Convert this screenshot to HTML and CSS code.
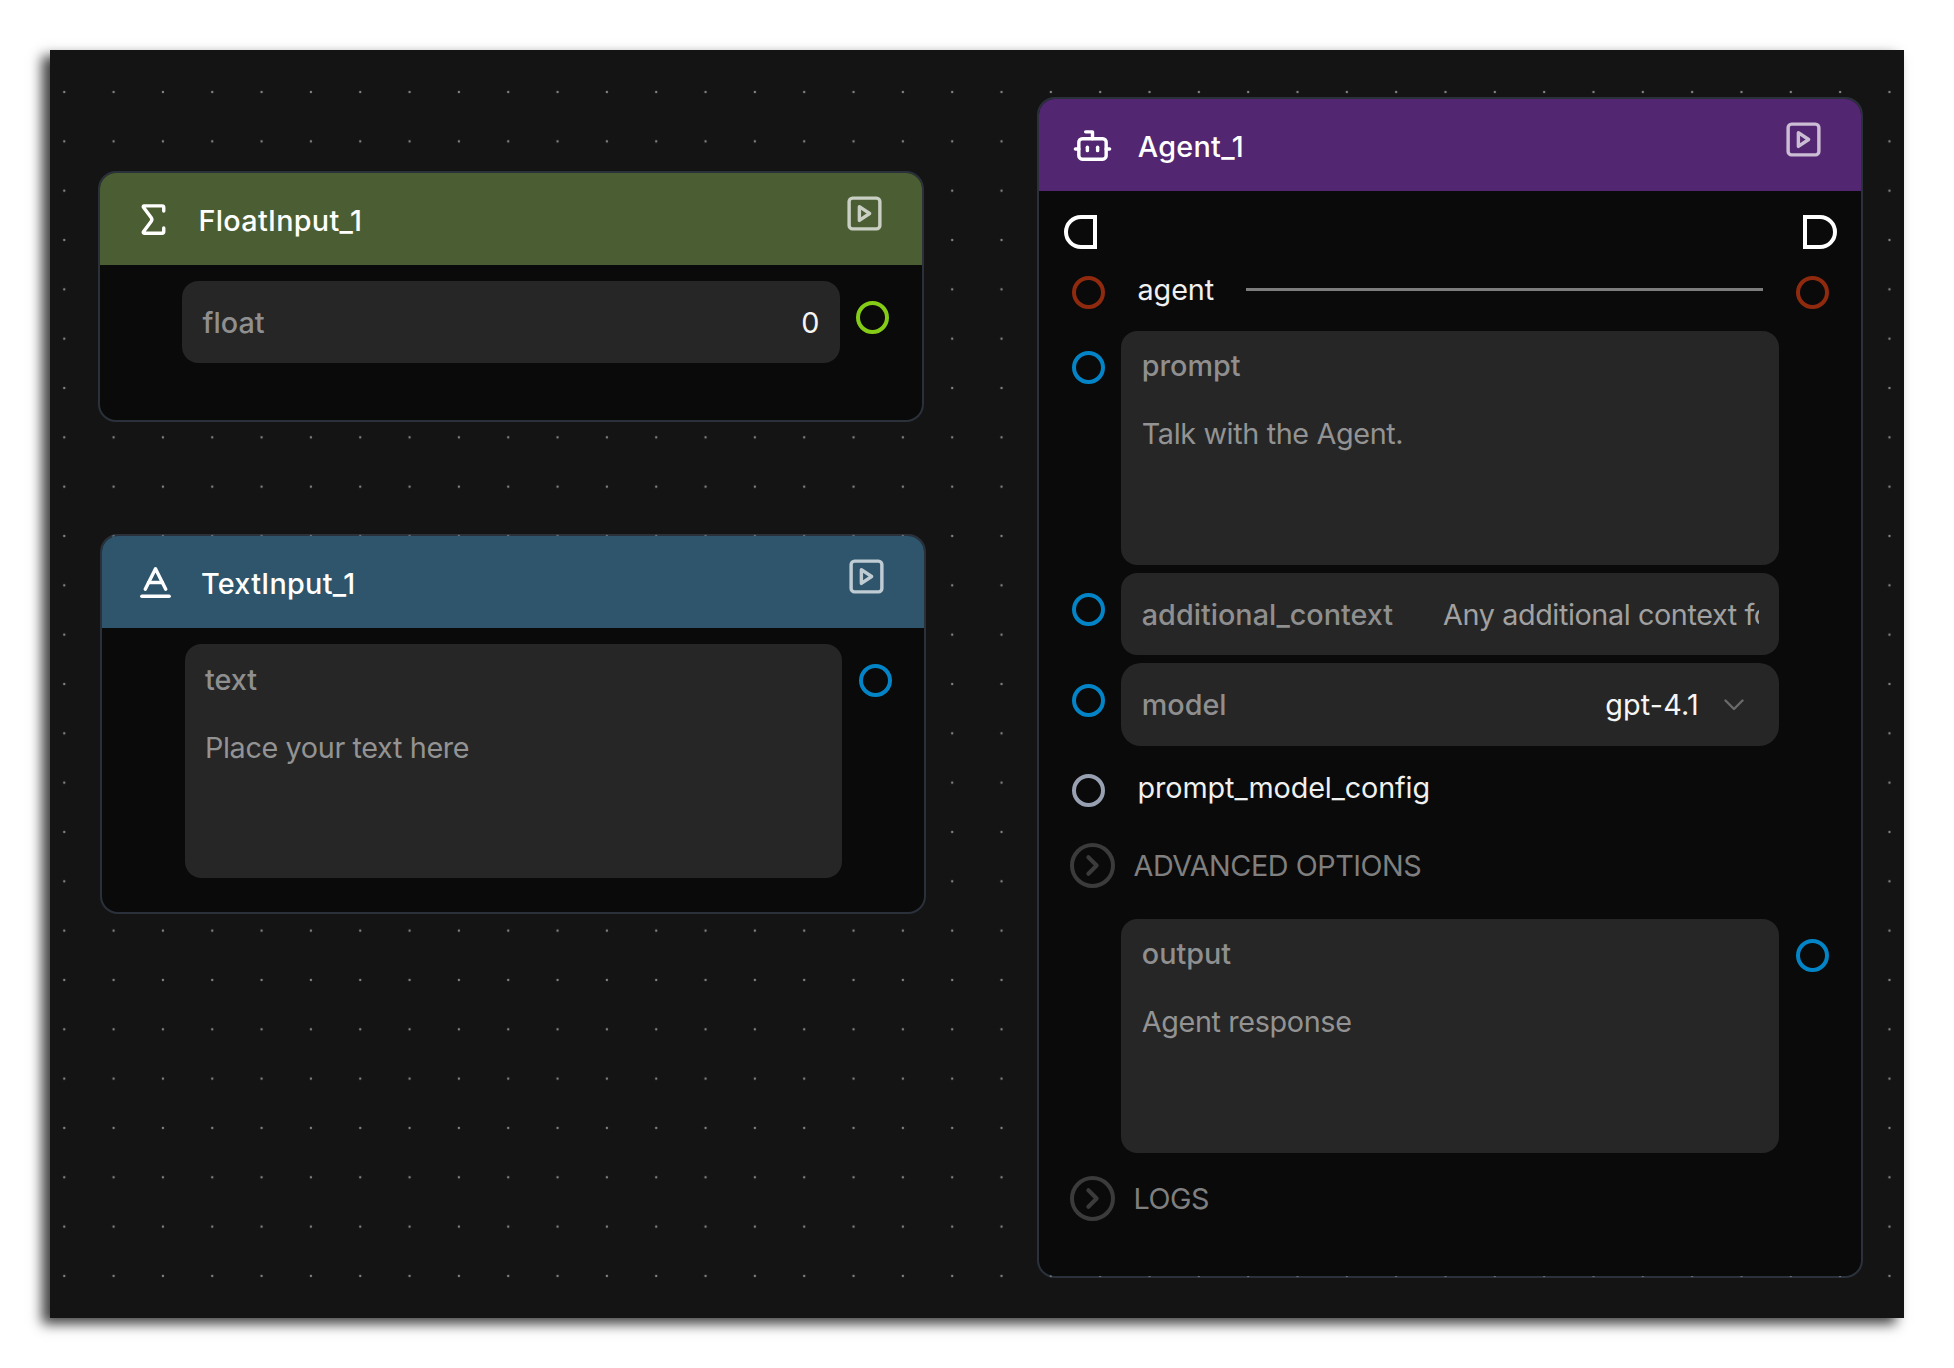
FILE: index.html
```html
<!DOCTYPE html>
<html lang="en">
<head>
  <meta charset="UTF-8">
  <meta name="viewport" content="width=device-width, initial-scale=1.0">
  <title>Workflow</title>
  <link rel="stylesheet" href="styles.css">
</head>
<body>
  <!-- shared icons -->
  <svg class="sprite" width="0" height="0">
    <symbol id="icon-play" viewBox="0 0 24 24">
      <rect x="3" y="3" width="18" height="18" rx="2"/>
      <path d="m9 8 6 4-6 4Z"/>
    </symbol>
    <symbol id="icon-chevron" viewBox="0 0 24 24">
      <path d="m9 18 6-6-6-6"/>
    </symbol>
  </svg>

  <div class="canvas">
    <svg class="dots" width="100%" height="100%">
      <pattern id="dots" x="-10.4" y="17.35" width="49.33" height="49.33" patternUnits="userSpaceOnUse">
        <circle cx="24.665" cy="24.665" r="1.2"/>
      </pattern>
      <rect width="100%" height="100%" fill="url(#dots)"/>
    </svg>

    <div class="node node-float">
      <div class="header">
        <svg class="icon" viewBox="0 0 24 24">
          <path d="M18 7V5a1 1 0 0 0-1-1H6.5a.5.5 0 0 0-.4.8l4.5 6a2 2 0 0 1 0 2.4l-4.5 6a.5.5 0 0 0 .4.8H17a1 1 0 0 0 1-1v-2"/>
        </svg>
        <div class="title">FloatInput_1</div>
        <svg class="icon run"><use href="#icon-play"/></svg>
      </div>
      <div class="body">
        <div class="row">
          <div class="field">
            <span class="label">float</span>
            <span class="value">0</span>
          </div>
          <i class="port out lime"></i>
        </div>
      </div>
    </div>

    <div class="node node-text">
      <div class="header">
        <svg class="icon" viewBox="0 0 24 24">
          <path d="M4 20h16"/>
          <path d="m6 16 6-12 6 12"/>
          <path d="M8 12h8"/>
        </svg>
        <div class="title">TextInput_1</div>
        <svg class="icon run"><use href="#icon-play"/></svg>
      </div>
      <div class="body">
        <div class="row">
          <div class="field area">
            <span class="label">text</span>
            <span class="placeholder">Place your text here</span>
          </div>
          <i class="port out blue"></i>
        </div>
      </div>
    </div>

    <div class="node node-agent">
      <div class="header">
        <svg class="icon" viewBox="0 0 24 24">
          <path d="M12 8V4H8"/>
          <rect x="4" y="8" width="16" height="12" rx="2"/>
          <path d="M2 14h2"/>
          <path d="M20 14h2"/>
          <path d="M15 13v2"/>
          <path d="M9 13v2"/>
        </svg>
        <div class="title">Agent_1</div>
        <svg class="icon run"><use href="#icon-play"/></svg>
      </div>
      <div class="body">
        <div class="exec">
          <i class="gate gate-in"></i>
          <i class="gate gate-out"></i>
        </div>
        <div class="row">
          <i class="port in red"></i>
          <div class="plain">agent<hr></div>
          <i class="port out red"></i>
        </div>
        <div class="row">
          <i class="port in blue"></i>
          <div class="field area">
            <span class="label">prompt</span>
            <span class="placeholder">Talk with the Agent.</span>
          </div>
        </div>
        <div class="row">
          <i class="port in blue"></i>
          <div class="field">
            <span class="label">additional_context</span>
            <span class="placeholder clip">Any additional context fo</span>
          </div>
        </div>
        <div class="row">
          <i class="port in blue"></i>
          <div class="field select">
            <span class="label">model</span>
            <span class="value">gpt-4.1</span>
            <svg class="caret" viewBox="0 0 20 12"><path d="m1.5 1.5 8.5 8.5 8.5-8.5"/></svg>
          </div>
        </div>
        <div class="row">
          <i class="port in slate"></i>
          <div class="plain">prompt_model_config</div>
        </div>
        <div class="section">
          <span class="toggle"><svg><use href="#icon-chevron"/></svg></span>
          ADVANCED OPTIONS
        </div>
        <div class="row">
          <div class="field area">
            <span class="label">output</span>
            <span class="placeholder">Agent response</span>
          </div>
          <i class="port out blue"></i>
        </div>
        <div class="section">
          <span class="toggle"><svg><use href="#icon-chevron"/></svg></span>
          LOGS
        </div>
      </div>
    </div>
  </div>
</body>
</html>
```

FILE: styles.css
```css
* {
  margin: 0;
  padding: 0;
  box-sizing: border-box;
}
body {
  padding: 50px;
  background: #ffffff;
  font-family: Inter, 'Open Sans', sans-serif;
  font-size: 28.78px;
  line-height: 41px;
  overflow: hidden;
}
.sprite {
  position: absolute;
}
.canvas {
  position: relative;
  width: 1854px;
  height: 1268px;
  background: #141414;
  box-shadow: -8px 6px 12px rgba(0, 0, 0, 0.75);
}
.dots {
  position: absolute;
  top: 0;
  left: 0;
  fill: #848484;
}

/* nodes */
.node {
  position: absolute;
  width: 826px;
  border: 2px solid rgba(75, 90, 112, 0.42);
  border-radius: 18px;
  background: #0a0a0a;
  background-clip: padding-box;
  overflow: hidden;
}
.node-float {
  left: 48px;
  top: 121px;
  height: 250.5px;
}
.node-text {
  left: 50.4px;
  top: 484px;
  height: 379.6px;
}
.node-agent {
  left: 987.2px;
  top: 47px;
  height: 1181px;
}
.header {
  display: flex;
  align-items: center;
  height: 92px;
  padding: 0 37px 0 33px;
  color: #ffffff;
}
.node-float .header {
  background: #4b5e33;
}
.node-text .header {
  background: #2e556b;
}
.node-agent .header {
  background: #522670;
}
.icon {
  width: 41px;
  height: 41px;
  fill: none;
  stroke: currentColor;
  stroke-width: 2;
  stroke-linecap: round;
  stroke-linejoin: round;
}
.run {
  margin-bottom: 10.5px;
  opacity: 0.7;
}
.title {
  flex: 1;
  margin-left: 24.5px;
  padding-top: 2px;
  font-weight: 500;
  letter-spacing: 0.3px;
}
.body {
  padding-top: 16.2px;
}

/* rows: left port | field | right port */
.row {
  display: grid;
  grid-template-columns: 82.2px 657.8px 1fr;
  margin-bottom: 8.3px;
}
.field {
  grid-column: 2;
  grid-row: 1;
  display: flex;
  align-items: center;
  height: 82.2px;
  padding: 0 20.4px;
  border-radius: 16.4px;
  background: #262626;
}
.label {
  color: #8f8f8f;
  font-weight: 500;
}
.value {
  margin-left: auto;
  color: #f5f5f5;
  letter-spacing: 0.15px;
}
.placeholder {
  color: #939393;
  letter-spacing: -0.36px;
}
.area {
  flex-direction: column;
  align-items: flex-start;
  gap: 27.2px;
  height: 234px;
  padding-top: 14.4px;
}
.clip {
  flex: 1;
  margin-left: 50px;
  overflow: hidden;
  white-space: nowrap;
  color: #a1a1a1;
  letter-spacing: -0.4px;
}
.select {
  border-radius: 20px;
}
.caret {
  width: 20px;
  height: 12px;
  margin: 0 15px 0 25px;
  fill: none;
  stroke: #6a6a6a;
  stroke-width: 2.4;
  stroke-linecap: round;
  stroke-linejoin: round;
}
.plain {
  grid-column: 2;
  display: flex;
  align-items: center;
  height: 66.4px;
  padding: 0 16.2px;
  color: #f0f0f0;
  letter-spacing: -0.1px;
}
.plain hr {
  flex: 1;
  height: 3px;
  margin-left: 31.6px;
  border: 0;
  background: #7d7d7d;
}

/* ports */
.port {
  grid-row: 1;
  width: 33px;
  height: 33px;
  margin-top: 20.2px;
  border: 4px solid;
  border-radius: 50%;
}
.in {
  grid-column: 1;
  margin-left: 32.4px;
}
.out {
  grid-column: 3;
  margin-left: 16.4px;
}
.lime {
  border-color: #84cc16;
}
.blue {
  border-color: #0284c7;
}
.red {
  border-color: #8f2a0e;
}
.slate {
  border-color: #98a1b2;
}
.exec {
  display: flex;
  justify-content: space-between;
  height: 48.8px;
  padding: 8px 24.5px;
}
.gate {
  width: 33.5px;
  height: 33.5px;
  border: 4px solid #ffffff;
}
.gate-in {
  border-radius: 17px 0 0 17px;
}
.gate-out {
  border-radius: 0 17px 17px 0;
}

/* collapsible sections */
.section {
  display: flex;
  align-items: center;
  gap: 18.8px;
  height: 74px;
  margin-bottom: 16.2px;
  padding-left: 30.4px;
  color: #7f7f7f;
  letter-spacing: -0.45px;
}
.toggle {
  display: flex;
  width: 45.2px;
  height: 45.2px;
  padding: 2px;
  border: 4px solid #3b3b3b;
  border-radius: 50%;
}
.toggle svg {
  width: 33px;
  height: 33px;
  fill: none;
  stroke: #3b3b3b;
  stroke-width: 3;
  stroke-linecap: round;
  stroke-linejoin: round;
}
```
